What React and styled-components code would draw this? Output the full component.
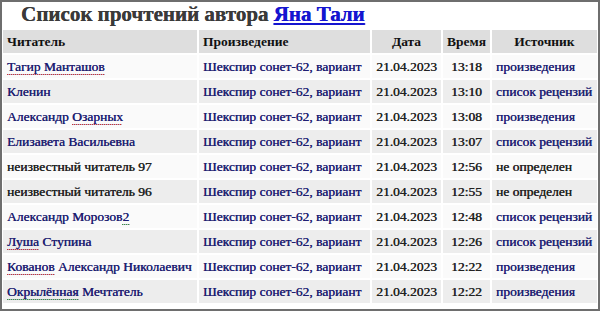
import React from "react";
import styled, { createGlobalStyle } from "styled-components";

const Global = createGlobalStyle`
  html, body { margin: 0; padding: 0; background: #fff; }
  body { font-family: "Liberation Serif", "Times New Roman", serif; }
`;

const Frame = styled.div`
  width: 600px;
  height: 311px;
  box-sizing: border-box;
  border: 2px solid #6e6e6e;
  background: #fff;
  overflow: hidden;
`;

const Title = styled.h1`
  margin: 0;
  height: 26px;
  padding-left: 19px;
  font-size: 21px;
  line-height: 25px;
  font-weight: bold;
  color: #3a3a3a;
  white-space: nowrap;
  text-shadow: 0.3px 0 0 currentColor;
`;

const AuthorLink = styled.a`
  color: #1515d0;
  text-decoration: underline;
  text-decoration-thickness: 2px;
  text-underline-offset: 2px;
`;

const Table = styled.table`
  width: 598px;
  margin: 0 -1px;
  border-collapse: separate;
  border-spacing: 2px;
  table-layout: fixed;
  font-size: 13.5px;
`;

const Th = styled.th`
  height: 23px;
  padding: 0 4px;
  background: #dedede;
  color: #111;
  font-weight: bold;
  text-align: ${(p) => p.$align || "center"};
  white-space: nowrap;
`;

const Td = styled.td`
  height: 23px;
  padding: 0 4px;
  background: ${(p) => (p.$alt ? "#ededed" : "#fafafa")};
  color: ${(p) => (p.$link ? "#1e1e72" : "#222")};
  text-align: ${(p) => p.$align || "left"};
  white-space: nowrap;
  overflow: hidden;
  text-shadow: 0.35px 0 0 currentColor;
`;

const Spell = styled.span`
  text-decoration: underline dotted ${(p) => (p.$green ? "#3a9a3a" : "#d03030")};
  text-decoration-thickness: 1px;
  text-underline-offset: 3px;
`;

const rows = [
  [<><Spell>Тагир Манташов</Spell></>, "13:18", "произведения"],
  ["Кленин", "13:10", "список рецензий"],
  [<>Александр <Spell>Озарных</Spell></>, "13:08", "произведения"],
  ["Елизавета Васильевна", "13:07", "список рецензий"],
  ["неизвестный читатель 97", "12:56", "не определен", true],
  ["неизвестный читатель 96", "12:55", "не определен", true],
  [<>Александр Морозов<Spell $green>2</Spell></>, "12:48", "список рецензий"],
  [<><Spell>Луша</Spell> Ступина</>, "12:26", "список рецензий"],
  [<><Spell>Кованов</Spell> Александр Николаевич</>, "12:22", "произведения"],
  [<><Spell $green>Окрылённая</Spell> Мечтатель</>, "12:22", "произведения"],
];

export default function App() {
  return (
    <>
      <Global />
      <Frame>
        <Title>
          Список прочтений автора <AuthorLink href="#">Яна Тали</AuthorLink>
        </Title>
        <Table>
          <colgroup>
            <col style={{ width: 194 }} />
            <col style={{ width: 171 }} />
            <col style={{ width: 69 }} />
            <col style={{ width: 47 }} />
            <col style={{ width: 105 }} />
          </colgroup>
          <thead>
            <tr>
              <Th $align="left">Читатель</Th>
              <Th $align="left">Произведение</Th>
              <Th>Дата</Th>
              <Th>Время</Th>
              <Th>Источник</Th>
            </tr>
          </thead>
          <tbody>
            {rows.map(([reader, time, source, unknown], i) => {
              const alt = i % 2 === 1;
              return (
                <tr key={i}>
                  <Td $alt={alt} $link={!unknown}>{reader}</Td>
                  <Td $alt={alt} $link>Шекспир сонет-62, вариант</Td>
                  <Td $alt={alt} $align="center">21.04.2023</Td>
                  <Td $alt={alt} $align="center">{time}</Td>
                  <Td $alt={alt} $link={!unknown}>{source}</Td>
                </tr>
              );
            })}
          </tbody>
        </Table>
      </Frame>
    </>
  );
}
